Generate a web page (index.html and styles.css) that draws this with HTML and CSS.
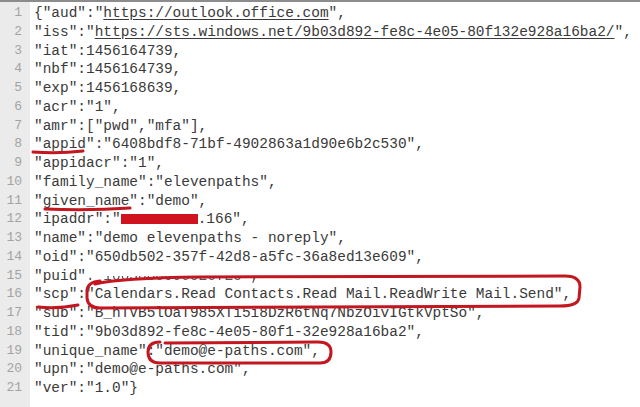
FILE: index.html
```html
<!DOCTYPE html>
<html>
<head>
<meta charset="utf-8">
<link rel="stylesheet" href="styles.css">
</head>
<body>
<div class="editor">
  <div class="gutter">
    <div>1</div><div>2</div><div>3</div><div>4</div><div>5</div><div>6</div><div>7</div>
    <div>8</div><div>9</div><div>10</div><div>11</div><div>12</div><div>13</div><div>14</div>
    <div>15</div><div>16</div><div>17</div><div>18</div><div>19</div><div>20</div><div>21</div>
  </div>
  <div class="code">
    <div class="line">{"aud":"<span class="link">https://outlook.office.com</span>",</div>
    <div class="line">"iss":"<span class="link">https://sts.windows.net/9b03d892-fe8c-4e05-80f132e928a16ba2/</span>",</div>
    <div class="line">"iat":1456164739,</div>
    <div class="line">"nbf":1456164739,</div>
    <div class="line">"exp":1456168639,</div>
    <div class="line">"acr":"1",</div>
    <div class="line">"amr":["pwd","mfa"],</div>
    <div class="line">"appid":"6408bdf8-71bf-4902863a1d90e6b2c530",</div>
    <div class="line">"appidacr":"1",</div>
    <div class="line">"family_name":"elevenpaths",</div>
    <div class="line">"given_name":"demo",</div>
    <div class="line">"ipaddr":"<span class="redact"></span>.166",</div>
    <div class="line">"name":"demo elevenpaths - noreply",</div>
    <div class="line">"oid":"650db502-357f-42d8-a5fc-36a8ed13e609",</div>
    <div class="line">"puid"<span class="faded">:"100300000C0E67E0",</span></div>
    <div class="line">"scp":"Calendars.Read Contacts.Read Mail.ReadWrite Mail.Send",</div>
    <div class="line">"sub":"B_hTVB5lOaT985XTi5i8DzR6tNq7NbzOivIGtkVptSo",</div>
    <div class="line">"tid":"9b03d892-fe8c-4e05-80f1-32e928a16ba2",</div>
    <div class="line">"unique_name":"demo@e-paths.com",</div>
    <div class="line">"upn":"demo@e-paths.com",</div>
    <div class="line">"ver":"1.0"}</div>
  </div>
  <svg class="marks" width="640" height="407" viewBox="0 0 640 407">
    <g fill="none" stroke="#c3161f" stroke-width="3" stroke-linecap="round" stroke-linejoin="round">
      <path d="M33 152 Q58 154 83 151"/>
      <path d="M45 209 Q88 211 130 208"/>
      <path d="M38 307 Q58 309 78 305"/>
      <path d="M100 281 Q88 282 87 290 L87 298 Q88 308 100 308 L560 306 Q578 306 579 298 L580 287 Q580 276 565 276 L200 277 Q120 278 95 284"/>
      <path d="M160 342 Q148 342 148 352 Q148 363 160 363 L320 363 Q331 363 331 352 Q331 342 318 342 L165 343"/>
    </g>
  </svg>
</div>
</body>
</html>
```
FILE: styles.css
```css
html, body {
  margin: 0;
  padding: 0;
  background: #ffffff;
}
.editor {
  position: relative;
  display: flex;
  width: 640px;
  height: 405px;
  border-top: 2px solid #8c8c8c;
  overflow: hidden;
  font-family: "Liberation Mono", "Courier New", monospace;
}
.gutter {
  width: 30px;
  flex: none;
  background: #ebebeb;
  color: #a3a3a3;
  font-size: 13px;
  line-height: 18.75px;
  text-align: right;
  padding: 2px 8px 0 0;
  box-sizing: border-box;
}
.code {
  flex: 1;
  padding: 2px 0 0 4px;
  color: #3a3a3a;
  font-size: 14.45px;
  line-height: 18.75px;
}
.line {
  white-space: pre;
}
.link {
  text-decoration: underline;
  text-underline-offset: 2px;
}
.redact {
  display: inline-block;
  width: 77px;
  height: 10px;
  background: #d0141f;
  vertical-align: -1px;
}
.faded {
  -webkit-mask-image: linear-gradient(to bottom, transparent 48%, #000 48%);
  mask-image: linear-gradient(to bottom, transparent 48%, #000 48%);
  color: #555;
}
.marks {
  position: absolute;
  left: 0;
  top: -2px;
  pointer-events: none;
}
```
